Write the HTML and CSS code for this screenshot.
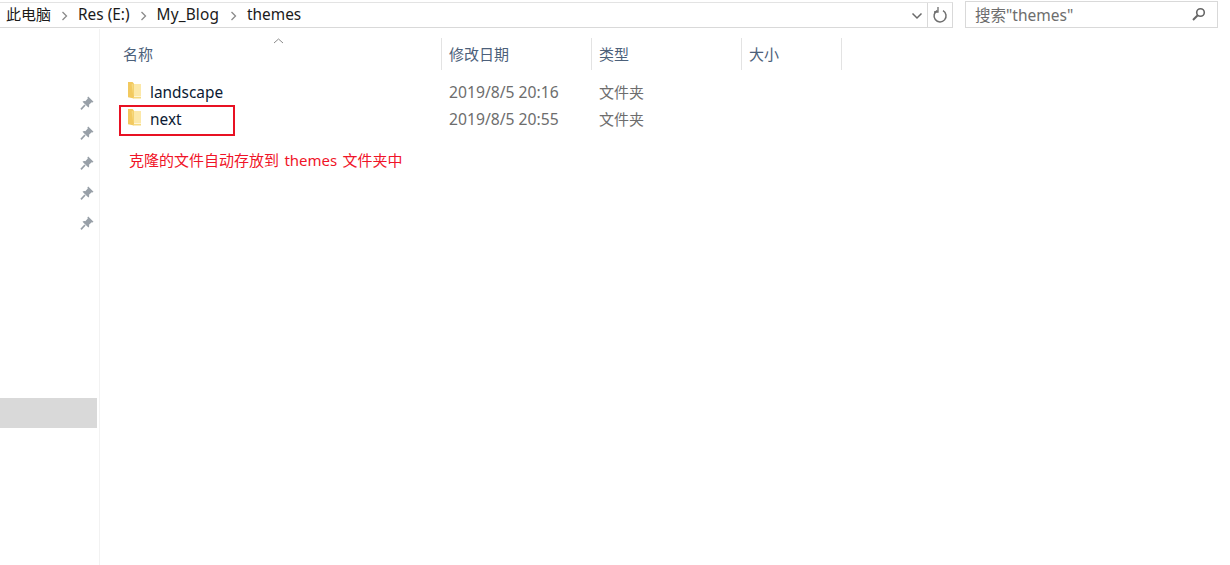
FILE: index.html
```html
<!DOCTYPE html>
<html lang="zh-CN">
<head>
<meta charset="utf-8">
<title>themes</title>
<link rel="stylesheet" href="styles.css">
</head>
<body>
<svg class="defs" width="0" height="0" aria-hidden="true">
  <symbol id="pin" viewBox="0 0 14 14">
    <path d="M8.200 .5 13.500 5.800 12.500 6.600 11.700 6.200 9 8.800C9.400 10 9.200 10.800 8.400 11.600L2.500 5.700C3.300 5 4.100 4.800 5.300 5.200L7.800 2.500 7.400 1.400Z" fill="#98a0a8"/>
    <path d="M5 9 1 13.300" stroke="#98a0a8" stroke-width="1.700" fill="none"/>
  </symbol>
  <symbol id="folder" viewBox="0 0 14 17">
    <path d="M0 0H4.500L6 1.500V16.500L0 15.200Z" fill="#f2c95f"/>
    <path d="M6 2H13V14.500H6Z" fill="#fce8a8"/>
    <path d="M3.500 2.500 5.500 1.500V16.500H13V15H5.500Z" fill="#f6d97f"/>
  </symbol>
</svg>
<div class="window">
  <header class="topbar">
    <nav class="address">
      <span class="crumb crumb-cjk">此电脑</span>
      <svg class="chev" width="7" height="10" viewBox="0 0 7 10"><path d="M1.500 1 5.500 5 1.500 9" fill="none" stroke="#8a8a8a" stroke-width="1.300"/></svg>
      <span class="crumb">Res (E:)</span>
      <svg class="chev" width="7" height="10" viewBox="0 0 7 10"><path d="M1.500 1 5.500 5 1.500 9" fill="none" stroke="#8a8a8a" stroke-width="1.300"/></svg>
      <span class="crumb crumb-blog">My_Blog</span>
      <svg class="chev" width="7" height="10" viewBox="0 0 7 10"><path d="M1.500 1 5.500 5 1.500 9" fill="none" stroke="#8a8a8a" stroke-width="1.300"/></svg>
      <span class="crumb">themes</span>
      <svg class="dropdown" width="12" height="8" viewBox="0 0 12 8"><path d="M1.500 1.500 6 6 10.500 1.500" fill="none" stroke="#6a6a6a" stroke-width="1.500"/></svg>
      <span class="refresh">
        <svg width="16" height="17" viewBox="0 0 16 17"><path d="M5.500 3.500A6 6 0 1 0 11 3.700" fill="none" stroke="#6f6f6f" stroke-width="1.500"/><path d="M5 .5V5.500H1" fill="none" stroke="#6f6f6f" stroke-width="1.300" transform="translate(1 -.5)"/></svg>
      </span>
    </nav>
    <div class="search">
      <span class="search-text">搜索"themes"</span>
      <svg width="15" height="15" viewBox="0 0 15 15"><circle cx="9.500" cy="5.500" r="3.800" fill="none" stroke="#666" stroke-width="1.600"/><path d="M6.700 8.300 2 13" stroke="#666" stroke-width="2"/></svg>
    </div>
  </header>
  <div class="body">
    <aside class="sidebar">
      <svg class="pin"><use href="#pin"/></svg>
      <svg class="pin"><use href="#pin"/></svg>
      <svg class="pin"><use href="#pin"/></svg>
      <svg class="pin"><use href="#pin"/></svg>
      <svg class="pin"><use href="#pin"/></svg>
      <div class="selected"></div>
    </aside>
    <main class="list">
      <svg class="caret" width="11" height="6" viewBox="0 0 11 6"><path d="M1 5 5.500 1 10 5" fill="none" stroke="#8a8a8a"/></svg>
      <div class="head">
        <div class="col col-name">名称</div>
        <div class="col col-date">修改日期</div>
        <div class="col col-type">类型</div>
        <div class="col col-size">大小</div>
      </div>
      <div class="rows">
        <div class="row">
          <div class="cell-name"><svg class="folder"><use href="#folder"/></svg><span class="file">landscape</span></div>
          <div class="cell-date">2019/8/5 20:16</div>
          <div class="cell-type">文件夹</div>
        </div>
        <div class="row">
          <div class="cell-name"><svg class="folder"><use href="#folder"/></svg><span class="file">next</span></div>
          <div class="cell-date">2019/8/5 20:55</div>
          <div class="cell-type">文件夹</div>
          <div class="redbox"></div>
        </div>
      </div>
      <p class="note">克隆的文件自动存放到 themes 文件夹中</p>
    </main>
  </div>
</div>
</body>
</html>
```
FILE: styles.css
```css
* { box-sizing: border-box; }
html, body { margin: 0; padding: 0; background: #fff; }
body { width: 1230px; height: 565px; overflow: hidden; font-family: "Noto Sans", "Noto Sans CJK SC", sans-serif; }
.defs { position: absolute; }
.window { display: flex; flex-direction: column; height: 565px; }
.topbar { display: flex; height: 29px; padding: 2px 12px 0 0; gap: 12px; align-items: flex-start; }
.address { display: flex; align-items: center; width: 953px; height: 26px; padding-left: 6px; border: 1px solid #d9d9d9; border-left: 0; border-top-color: #e3e3e3; font-size: 15.400px; color: #1a1a1a; }
.crumb { line-height: 24px; white-space: nowrap; }
.crumb-cjk { font-size: 15px; margin-top: -2px; }
.crumb-blog { margin-right: 1px; letter-spacing: .15px; }
.chev { margin: 1px 10px 0 10px; }
.dropdown { margin-left: auto; margin-right: 4px; margin-top: 1px; }
.refresh { display: flex; align-items: center; justify-content: center; width: 25px; height: 24px; border-left: 1px solid #d9d9d9; }
.search { display: flex; align-items: center; justify-content: space-between; width: 253px; height: 27px; margin-top: -1px; padding: 0 11px 0 9px; border: 1px solid #d9d9d9; font-size: 15.500px; color: #6d6d6d; }
.body { display: flex; flex: 1; min-height: 0; }
.sidebar { display: flex; flex-direction: column; align-items: flex-end; width: 100px; padding: 67px 0 0 0; border-right: 1px solid #f2f2f2; }
.pin { display: block; width: 14px; height: 14px; margin: 0 5px 16px 0; }
.selected { align-self: flex-start; width: 97px; height: 30px; margin-top: 152px; background: #d9d9d9; }
.list { position: relative; flex: 1; }
.caret { position: absolute; left: 173px; top: 9px; }
.head { display: flex; height: 32px; margin-top: 9px; font-size: 15px; line-height: 32px; color: #4c607a; }
.col { padding-left: 7px; border-right: 1px solid #e3e3e3; }
.col-name { width: 342px; padding-left: 23px; }
.col-date { width: 150px; }
.col-type { width: 150px; }
.col-size { width: 100px; }
.rows { display: flex; flex-direction: column; padding-top: 8px; }
.row { position: relative; display: flex; height: 27px; align-items: center; font-size: 15px; color: #6d6d6d; }
.cell-name { display: flex; align-items: center; width: 342px; padding-left: 28px; font-size: 15.400px; color: #0b1a33; }
.file { margin-top: 2px; }
.folder { width: 14px; height: 17px; margin: -3px 8px 0 0; }
.cell-date { width: 150px; padding-left: 7px; font-size: 15.700px; }
.cell-type { width: 150px; padding-left: 7px; }
.redbox { position: absolute; left: 19px; top: 0; width: 116px; height: 31px; border: 2px solid #e81123; }
.note { margin: 18px 0 0 29px; font-size: 15px; line-height: 20px; word-spacing: 1.500px; color: #f01428; }
```
